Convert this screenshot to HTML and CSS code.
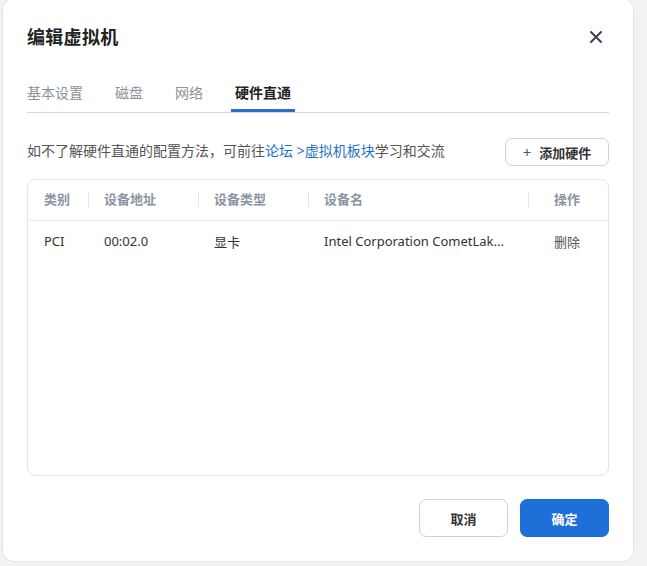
FILE: index.html
```html
<!DOCTYPE html>
<html lang="zh">
<head>
<meta charset="utf-8">
<link rel="stylesheet" href="styles.css">
</head>
<body>
<div class="dialog">
  <div class="head">
    <h1 class="title">编辑虚拟机</h1>
    <svg class="close" width="14" height="14" viewBox="0 0 14 14"><path d="M2 2L12 12M12 2L2 12" stroke="#3d4450" stroke-width="2" stroke-linecap="round"/></svg>
  </div>
  <div class="tabs">
    <span class="tab">基本设置</span>
    <span class="tab">磁盘</span>
    <span class="tab">网络</span>
    <span class="tab active">硬件直通</span>
  </div>
  <div class="bar">
    <p class="desc">如不了解硬件直通的配置方法，可前往<a class="link">论坛 &gt;虚拟机板块</a>学习和交流</p>
    <button class="add"><span class="plus">+</span>添加硬件</button>
  </div>
  <div class="table">
    <div class="row thead">
      <div class="c c1">类别</div>
      <div class="c c2">设备地址</div>
      <div class="c c3">设备类型</div>
      <div class="c c4">设备名</div>
      <div class="c c5">操作</div>
    </div>
    <div class="row tbody">
      <div class="c c1">PCI</div>
      <div class="c c2">00:02.0</div>
      <div class="c c3">显卡</div>
      <div class="c c4">Intel Corporation CometLak...</div>
      <div class="c c5">删除</div>
    </div>
  </div>
  <div class="foot">
    <button class="btn cancel">取消</button>
    <button class="btn ok">确定</button>
  </div>
</div>
</body>
</html>
```
FILE: styles.css
```css
html, body { margin: 0; padding: 0; }
body {
  width: 647px; height: 566px; overflow: hidden;
  background: #f2f2f3;
  font-family: "Noto Sans", "Noto Sans CJK SC", sans-serif;
  color: #333;
}
.dialog {
  box-sizing: border-box;
  width: 632px; height: 564px;
  margin: -2px 0 0 2px;
  background: #fff;
  border: 1px solid #e3e4e6;
  border-radius: 12px;
  padding: 0 24px 0 24px;
  display: flex; flex-direction: column;
}
.head {
  height: 76px; display: flex; align-items: center; justify-content: space-between;
}
.title { margin: 0; font-size: 18px; font-weight: 700; color: #222; letter-spacing: 0.3px; line-height: 1; }
.close { margin-right: 6px; }
.tabs {
  display: flex; gap: 32px; height: 32px; align-items: flex-start;
  border-bottom: 1px solid #d4d8de;
  width: 582px; margin-top: 5px;
}
.tab { font-size: 14px; color: #8b929c; line-height: 20px; height: 31px; box-sizing: border-box; padding-top: 3px; }
.tab.active { color: #222; font-weight: 700; border-bottom: 3px solid #2a6fd0; padding: 3px 4px 0; margin-left: -4px; height: 32px; }
.bar {
  width: 582px; display: flex; justify-content: space-between; align-items: center;
  margin-top: 25px; height: 28px;
}
.desc { margin: 0; font-size: 14px; color: #555; line-height: 20px; margin-top: -2px; }
.link { color: #2472c8; text-decoration: none; }
.add {
  box-sizing: border-box; width: 104px; height: 28px;
  border: 1px solid #cdd1d7; border-radius: 7px; background: #fff;
  font-family: inherit; font-size: 13px; font-weight: 700; color: #333;
  display: flex; align-items: center; justify-content: center; gap: 8px; padding: 0;
}
.plus { font-weight: 400; font-size: 15px; color: #555; line-height: 1; }
.table {
  box-sizing: border-box; width: 582px; height: 297px; margin-top: 13px;
  border: 1px solid #e2e5e9; border-radius: 8px;
}
.row { display: grid; grid-template-columns: 60px 110px 110px 220px 80px; align-items: center; }
.thead { height: 40px; border-bottom: 1px solid #e7e9ec; }
.thead .c { font-size: 13px; font-weight: 700; color: #8a94a3; position: relative; line-height: 18px; margin-top: -3px; }
.thead .c + .c::before {
  content: ""; position: absolute; left: 0; top: 2px; width: 1px; height: 15px; background: #e3e6ea;
}
.c { padding-left: 16px; font-size: 13px; color: #333; white-space: nowrap; }
.c5 { padding-left: 26px; }
.tbody { height: 40px; }
.tbody .c5 { color: #555; }
.foot {
  display: flex; justify-content: flex-end; gap: 12px; width: 582px; margin-top: 23px;
}
.btn {
  box-sizing: border-box; width: 89px; height: 38px; border-radius: 7px;
  font-family: inherit; font-size: 13px; font-weight: 700; padding: 0;
}
.cancel { background: #fff; border: 1px solid #cdd1d7; color: #333; }
.ok { background: #1f6fd9; border: 1px solid #1f6fd9; color: #fff; }
```
